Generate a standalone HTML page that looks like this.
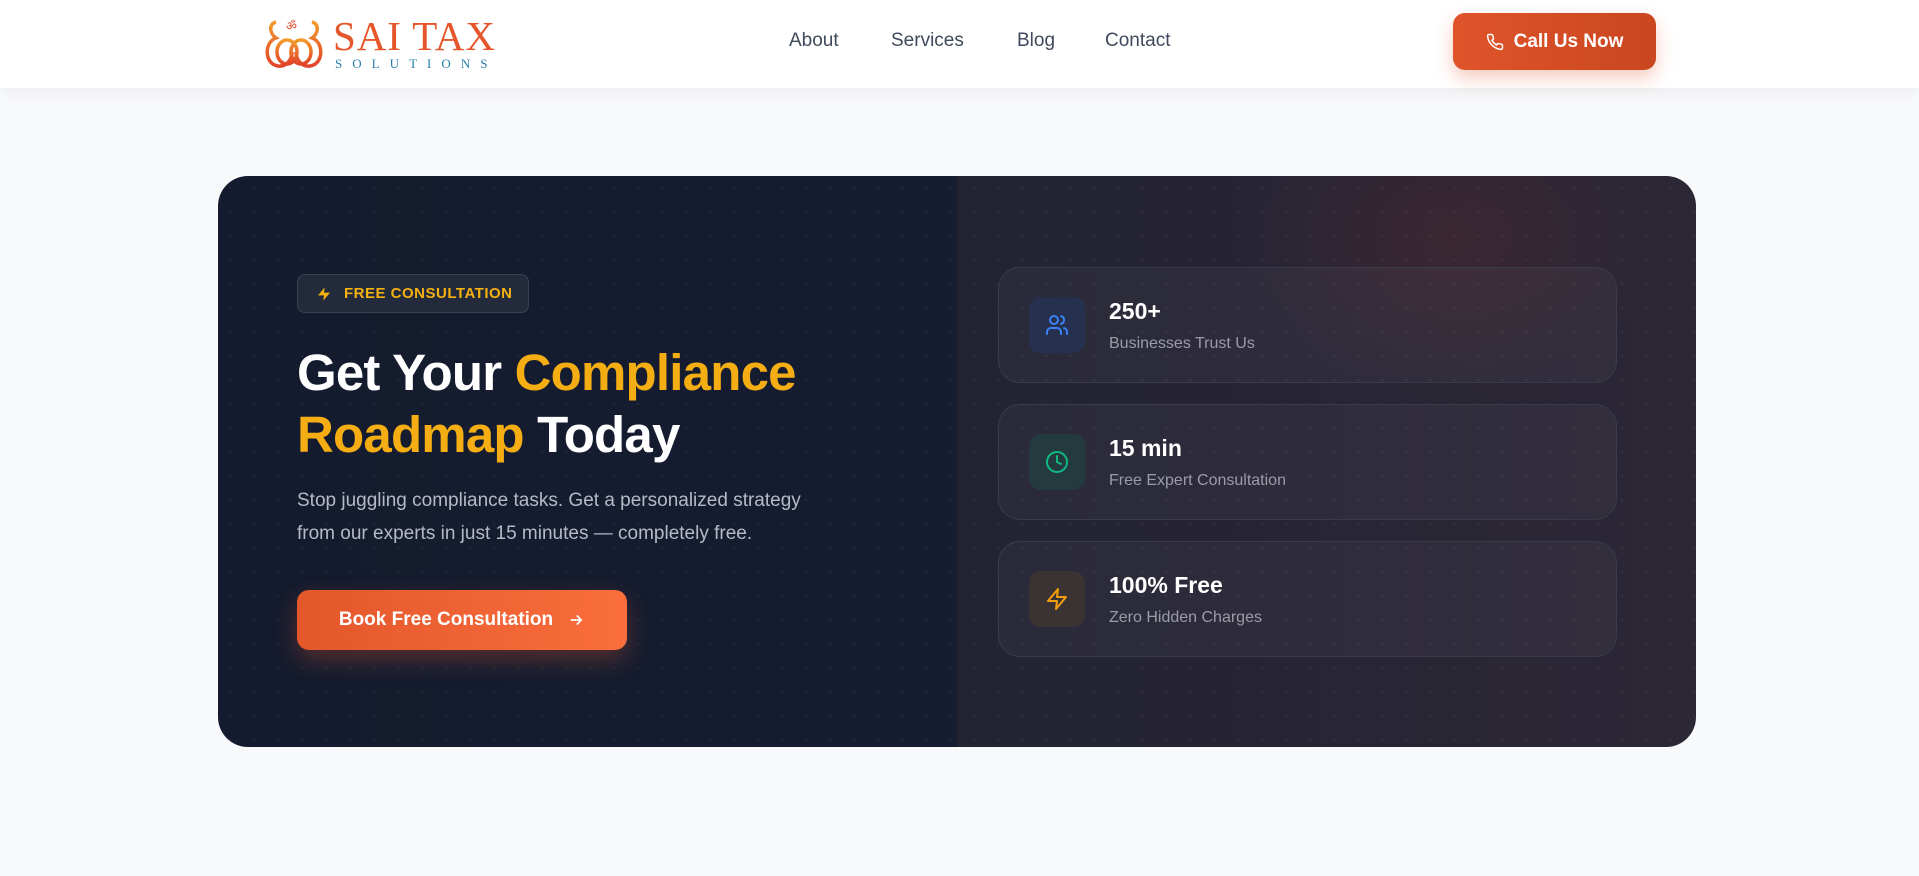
<!DOCTYPE html>
<html><head><meta charset="utf-8"><style>
*{margin:0;padding:0;box-sizing:border-box}
body{width:1919px;height:876px;overflow:hidden;background:#f8f9fb;font-family:"Liberation Sans",sans-serif;position:relative}
.hdr{position:absolute;left:0;top:0;width:1919px;height:88px;background:#fff;box-shadow:0 4px 14px rgba(0,0,0,.05)}
.logo{position:absolute;left:264px;top:14px}
.nav a{position:absolute;top:30px;font-size:19px;color:#3f4a5c;text-decoration:none}
.call{position:absolute;left:1453px;top:13px;width:203px;height:57px;border-radius:12px;background:linear-gradient(90deg,#e0542a,#c9461f);color:#fff;font-weight:bold;font-size:19px;display:flex;align-items:center;justify-content:center;gap:10px;box-shadow:0 8px 18px rgba(224,84,42,.3)}
.card{position:absolute;left:218px;top:176px;width:1478px;height:571px;border-radius:30px;overflow:hidden;background:linear-gradient(90deg,#141b2e 0%,#161d30 50%,#232333 50.1%,#2c2735 100%)}
.dots{position:absolute;inset:0;background-image:radial-gradient(rgba(255,255,255,.06) 1px,transparent 1.3px);background-size:24px 24px}
.glow{position:absolute;left:1020px;top:-100px;width:420px;height:320px;background:radial-gradient(ellipse,rgba(120,45,40,.22),transparent 70%)}
.badge{position:absolute;left:79px;top:98px;width:232px;height:39px;border:1px solid #3a4152;background:#232a3b;border-radius:8px;color:#f5b10f;font-weight:bold;font-size:15px;letter-spacing:.5px;display:flex;align-items:center;padding-left:18px;gap:12px}
h1{position:absolute;left:79px;top:166px;font-size:51px;line-height:62px;color:#fff;font-weight:bold;letter-spacing:-.8px}
h1 span{color:#f5ad14}
p.d{position:absolute;left:79px;top:308px;font-size:19px;line-height:33px;color:#b4bac6}
.btn{position:absolute;left:79px;top:414px;width:330px;height:60px;border-radius:12px;background:linear-gradient(90deg,#e3572b,#fa6d3c);color:#fff;font-weight:bold;font-size:19px;display:flex;align-items:center;justify-content:center;gap:14px;box-shadow:0 10px 24px rgba(230,90,45,.3)}
.st{position:absolute;left:780px;width:619px;height:116px;border:1px solid #3a3b4a;border-radius:22px;background:rgba(255,255,255,.035)}
.ic{position:absolute;left:30px;top:29px;width:56px;height:56px;border-radius:12px;display:flex;align-items:center;justify-content:center}
.st b{position:absolute;left:110px;top:30px;font-size:23px;color:#fff}
.st i{position:absolute;left:110px;top:67px;font-style:normal;font-size:16px;color:#9a9ca6}
</style></head><body>
<div class="hdr">
<div class="logo"><svg width="235" height="60" viewBox="0 0 235 60">
<defs><linearGradient id="g" x1="0" y1="0" x2="0" y2="1"><stop offset="0" stop-color="#f39a2c"/><stop offset="1" stop-color="#e2442a"/></linearGradient></defs>
<g fill="none" stroke="url(#g)" stroke-width="3.5">
<path d="M12 8c-8 2-6 12 0 16c-12 4-12 26 2 28c8 1 14-6 14-14"/>
<path d="M48 8c8 2 6 12 0 16c12 4 12 26-2 28c-8 1-14-6-14-14"/>
<ellipse cx="23" cy="38" rx="10" ry="12"/><ellipse cx="37" cy="38" rx="10" ry="12"/>
</g>
<text x="22" y="16" font-size="12" fill="#e2442a" font-family="Liberation Serif">ॐ</text>
<text x="69" y="36" font-family="Liberation Serif" font-size="41" fill="#e5562b" textLength="162">SAI TAX</text>
<text x="71" y="54" font-family="Liberation Serif" font-size="13" letter-spacing="7.5" fill="#2a7fa8" textLength="160">SOLUTIONS</text>
</svg></div>
<div class="nav"><a style="left:789px">About</a><a style="left:891px">Services</a><a style="left:1017px">Blog</a><a style="left:1105px">Contact</a></div>
<div class="call"><svg width="18" height="18" viewBox="0 0 24 24" fill="none" stroke="#fff" stroke-width="2"><path d="M22 16.9v3a2 2 0 0 1-2.2 2 19.8 19.8 0 0 1-8.6-3.1 19.5 19.5 0 0 1-6-6A19.8 19.8 0 0 1 2.1 4.2 2 2 0 0 1 4.1 2h3a2 2 0 0 1 2 1.7c.1 1 .4 1.9.7 2.8a2 2 0 0 1-.5 2.1L8 9.9a16 16 0 0 0 6 6l1.3-1.3a2 2 0 0 1 2.1-.4c.9.3 1.8.6 2.8.7a2 2 0 0 1 1.7 2z"/></svg>Call Us Now</div>
</div>
<div class="card"><div class="dots"></div><div class="glow"></div>
<div class="badge"><svg width="16" height="18" viewBox="0 0 24 24" fill="#f5b10f"><path d="M13 2 3 14h9l-1 8 10-12h-9z"/></svg>FREE CONSULTATION</div>
<h1>Get Your <span>Compliance</span><br><span>Roadmap</span> Today</h1>
<p class="d">Stop juggling compliance tasks. Get a personalized strategy<br>from our experts in just 15 minutes — completely free.</p>
<div class="btn">Book Free Consultation <svg width="18" height="18" viewBox="0 0 24 24" fill="none" stroke="#fff" stroke-width="2.2"><path d="M5 12h14M13 6l6 6-6 6"/></svg></div>
<div class="st" style="top:91px"><div class="ic" style="background:#25314f"><svg width="24" height="24" viewBox="0 0 24 24" fill="none" stroke="#3b82f6" stroke-width="2" stroke-linecap="round"><path d="M16 21v-2a4 4 0 0 0-4-4H6a4 4 0 0 0-4 4v2"/><circle cx="9" cy="7" r="4"/><path d="M22 21v-2a4 4 0 0 0-3-3.9M16 3.1a4 4 0 0 1 0 7.8"/></svg></div><b>250+</b><i>Businesses Trust Us</i></div>
<div class="st" style="top:228px"><div class="ic" style="background:#233a3e"><svg width="24" height="24" viewBox="0 0 24 24" fill="none" stroke="#10b981" stroke-width="2" stroke-linecap="round"><circle cx="12" cy="12" r="10"/><path d="M12 6v6l4 2"/></svg></div><b>15 min</b><i>Free Expert Consultation</i></div>
<div class="st" style="top:365px"><div class="ic" style="background:#3b3233"><svg width="24" height="24" viewBox="0 0 24 24" fill="none" stroke="#f59e0b" stroke-width="2" stroke-linejoin="round"><path d="M13 2 3 14h9l-1 8 10-12h-9z"/></svg></div><b>100% Free</b><i>Zero Hidden Charges</i></div>
</div>
</body></html>
